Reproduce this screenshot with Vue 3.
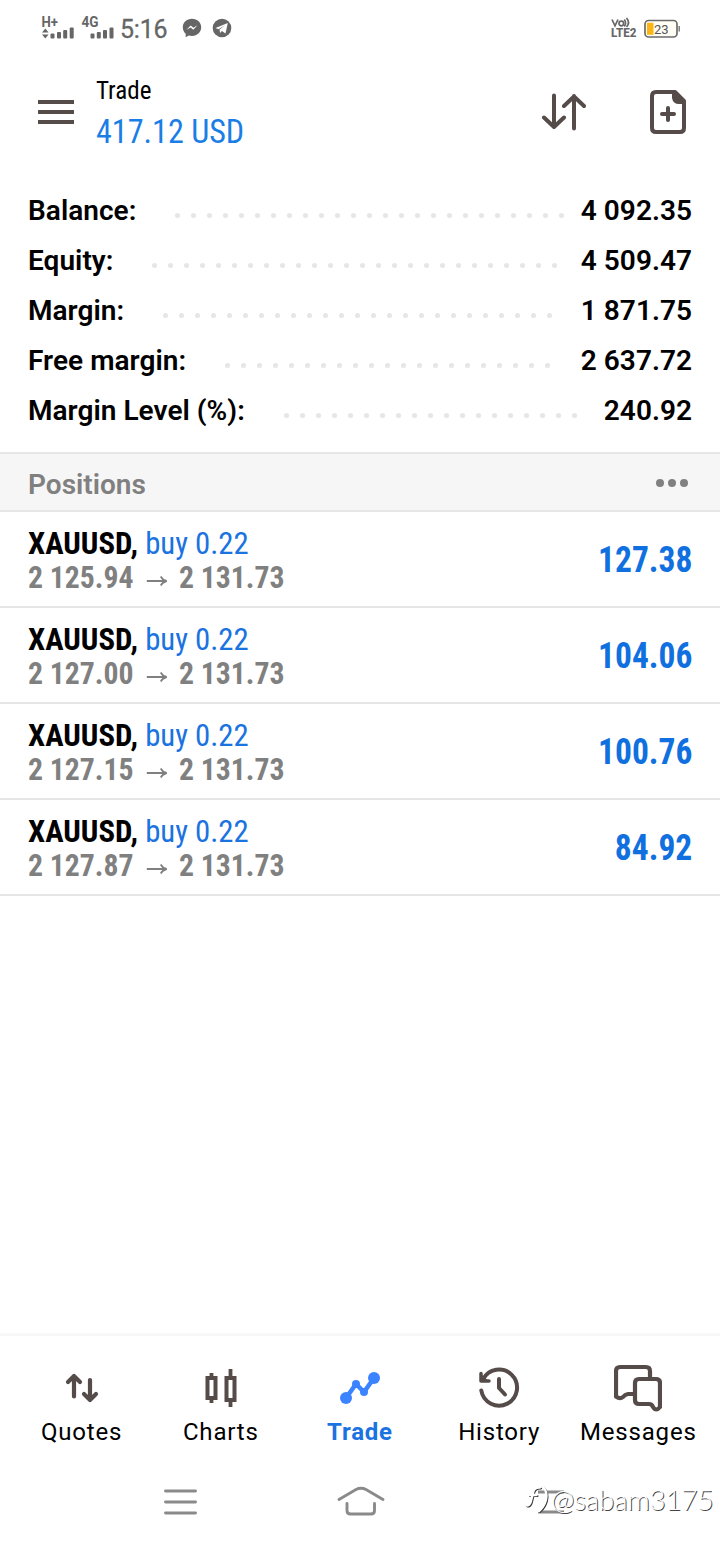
<script setup>
const summary = [
  { label: 'Balance:', value: '4 092.35', dots: 25 },
  { label: 'Equity:', value: '4 509.47', dots: 26 },
  { label: 'Margin:', value: '1 871.75', dots: 25 },
  { label: 'Free margin:', value: '2 637.72', dots: 21 },
  { label: 'Margin Level (%):', value: '240.92', dots: 19 },
]
const positions = [
  { open: '2 125.94', now: '2 131.73', profit: '127.38' },
  { open: '2 127.00', now: '2 131.73', profit: '104.06' },
  { open: '2 127.15', now: '2 131.73', profit: '100.76' },
  { open: '2 127.87', now: '2 131.73', profit: '84.92' },
]
</script>

<template>
  <div class="screen">
    <div class="status">
      <svg class="signals" width="76" height="26" viewBox="0 0 76 26">
        <g fill="#666">
          <text x="-0.500" y="12" class="net" textLength="16.500" lengthAdjust="spacingAndGlyphs">H+</text>
          <path d="M0 17.500 L3.300 13.500 L6.600 17.500Z M0 19.500 L6.600 19.500 L3.300 23.500Z" />
          <rect x="8.500" y="18.500" width="4" height="5" rx="1" /><rect x="15" y="17" width="4" height="6.500" rx="1" />
          <rect x="21.200" y="15" width="4" height="8.500" rx="1" /><rect x="27.700" y="12.500" width="4" height="11" rx="1" />
          <text x="39.500" y="12" class="net" textLength="17" lengthAdjust="spacingAndGlyphs">4G</text>
          <rect x="48.500" y="18.500" width="4" height="5" rx="1" /><rect x="54.800" y="17" width="4" height="6.500" rx="1" />
          <rect x="61" y="15" width="4" height="8.500" rx="1" /><rect x="67.500" y="12.500" width="4" height="11" rx="1" />
        </g>
      </svg>
      <span class="clock">5:16</span>
      <svg class="apps" width="50" height="20" viewBox="0 0 50 20">
        <path fill="#666" d="M10 .8C4.500 .8 .8 4.700 .8 9.300c0 2.600 1.100 4.900 2.900 6.400v3.500l3.100-1.700c1 .3 2.100.4 3.200.4 5.500 0 9.200-3.900 9.200-8.600S15.500.8 10 .8z" />
        <path d="M4.500 11.800 8.600 7.500l2.800 2.300 4.100-2.500-4.200 4.400-2.700-2.300z" fill="#fff" />
        <circle cx="40" cy="10" r="9.300" fill="#666" />
        <path d="M33.500 10 45.800 5 43.500 15.500 39.900 13 38 15 37.600 11.600 43 7.300 36.500 11.300z" fill="#fff" />
      </svg>
      <svg class="volte" width="28" height="22" viewBox="0 0 28 22">
        <g fill="none" stroke="#666" stroke-width="1.700">
          <path d="M1 2.500 4 8.800 7 2.500" /><circle cx="10.300" cy="6.500" r="2.300" />
          <path d="M13.300 2.500q2.500 3.500 0 7M15.500 1q4 4.500 0 9" />
        </g>
        <text x="0" y="20" class="lte" textLength="25.500" lengthAdjust="spacingAndGlyphs">LTE2</text>
      </svg>
      <svg class="battery" width="37" height="20" viewBox="0 0 37 20">
        <rect x="1" y="1.500" width="32" height="16.500" rx="3.500" fill="#fffdf4" stroke="#6b6b6b" stroke-width="1.700" />
        <rect x="3" y="3.800" width="6.500" height="12" fill="#fbb615" />
        <rect x="34.500" y="7" width="1.400" height="5.500" fill="#777" />
        <text x="10" y="14.500" class="pct">23</text>
      </svg>
    </div>

    <header class="top">
      <svg class="burger" width="36" height="24" viewBox="0 0 36 24"><path d="M0 2h36M0 12h36M0 22h36" stroke="#554b48" stroke-width="4" /></svg>
      <div class="title">
        <div class="name cond">Trade</div>
        <div class="sum cond">417.12 USD</div>
      </div>
      <svg class="sort" width="44" height="38" viewBox="0 0 44 38">
        <path d="M12 2.500V34M2 24.500l10 9.500 10-9.500M32 35.500V3M22 13l10-9.500L42 13" fill="none" stroke="#554b48" stroke-width="4" stroke-linecap="round" stroke-linejoin="round" />
      </svg>
      <svg class="add" width="36" height="44" viewBox="0 0 36 44">
        <path d="M6 2H25L34 11V38Q34 42 30 42H6Q2 42 2 38V6Q2 2 6 2Z" fill="none" stroke="#554b48" stroke-width="4" stroke-linejoin="round" />
        <path d="M22 2V8Q23 14 29 14H35V10L26 1Z" fill="#554b48" />
        <path d="M18 18V30M12 24H24" stroke="#554b48" stroke-width="4" stroke-linecap="round" />
      </svg>
    </header>

    <section class="summary">
      <div v-for="r in summary" :key="r.label" class="line">
        <span>{{ r.label }}</span>
        <span class="dots"><i v-for="n in r.dots" :key="n"></i></span>
        <span class="value">{{ r.value }}</span>
      </div>
    </section>

    <div class="section-head">
      <span>Positions</span>
      <svg width="32" height="8" viewBox="0 0 32 8" fill="#808080"><circle cx="4" cy="4" r="4" /><circle cx="16" cy="4" r="4" /><circle cx="28" cy="4" r="4" /></svg>
    </div>

    <div v-for="p in positions" :key="p.open" class="position">
      <div>
        <div class="symbol cond"><b>XAUUSD,</b> <span>buy 0.22</span></div>
        <div class="prices cond">
          <span>{{ p.open }}</span>
          <svg width="24" height="12" viewBox="0 0 24 12"><path d="M1 6H22M16 1.500Q18 5 22.500 6Q18 7 16 10.500" fill="none" stroke="#808080" stroke-width="1.800" /></svg>
          <span>{{ p.now }}</span>
        </div>
      </div>
      <div class="profit cond">{{ p.profit }}</div>
    </div>

    <nav class="tabs">
      <div class="tab">
        <svg width="48" height="48" viewBox="0 0 48 48"><path d="M16 32.500V12M10 18l6-6 6 6M32 16v20M26 30l6 6 6-6" fill="none" stroke="#554b48" stroke-width="4.200" stroke-linecap="round" stroke-linejoin="round" /></svg>
        <span>Quotes</span>
      </div>
      <div class="tab">
        <svg width="48" height="48" viewBox="0 0 48 48"><g fill="none" stroke="#554b48" stroke-width="4"><path d="M10.500 14h8v20h-8zM29.500 14h8v22h-8z" /><path d="M14.500 9v5M14.500 34v5M33.500 5v9M33.500 36v7" stroke-width="3.800" /></g></svg>
        <span>Charts</span>
      </div>
      <div class="tab active">
        <svg width="48" height="48" viewBox="0 0 48 48"><path d="M10 34 20 20 28 28 38 14" fill="none" stroke="#3b83ff" stroke-width="4.500" /><g fill="#3b83ff"><circle cx="10" cy="34" r="6" /><circle cx="20" cy="20" r="4" /><circle cx="28" cy="28" r="4" /><circle cx="38" cy="14" r="6" /></g></svg>
        <span>Trade</span>
      </div>
      <div class="tab">
        <svg width="48" height="48" viewBox="0 0 48 48"><g fill="none" stroke="#554b48" stroke-width="4" stroke-linecap="round" stroke-linejoin="round"><path d="M6.300 26.500A18 18 0 1 0 8 15.500" /><path d="M6 9.500V17H14" stroke-width="3.500" /><path d="M24 15v9l6 6.500" /></g><path d="M5 9 14 17.500H5z" fill="#554b48" /></svg>
        <span>History</span>
      </div>
      <div class="tab">
        <svg class="chat" width="48" height="48" viewBox="0 0 48 48"><g fill="none" stroke="#554b48" stroke-width="4.200" stroke-linejoin="round" stroke-linecap="round"><path d="M20 30H14Q11 30.500 9 33Q6 35.500 2 32.500V7Q2 3 6 3H32Q36 3 36 7V14" /><path d="M25 15H42Q46 15 46 19V43Q42 48 39 43Q38 40 35 40H25Q21 40 21 36V19Q21 15 25 15Z" /></g></svg>
        <span>Messages</span>
      </div>
    </nav>

    <div class="system">
      <svg class="recent" width="34" height="28" viewBox="0 0 34 28"><path d="M1.500 3H31.500M1.500 14H31.500M1.500 25H31.500" stroke="#8a8a8a" stroke-width="2.900" stroke-linecap="round" /></svg>
      <svg class="home" width="48" height="32" viewBox="0 0 48 32"><path d="M2 14.500 19 4.500Q24 2 29 4.500L46 14.500M10 18.500V25.500Q10 29 13.500 29H34Q37.500 29 37.500 25.500V18.500" fill="none" stroke="#8a8a8a" stroke-width="2.900" stroke-linecap="round" /></svg>
      <svg class="back" width="36" height="26" viewBox="0 0 36 26"><path d="M4 3H30M4 23H30" stroke="#8a8a8a" stroke-width="2.900" /></svg>
    </div>
    <div class="mark">
      <svg width="28" height="34" viewBox="0 0 28 34">
        <g fill="none" stroke-linecap="round">
          <path d="M3 24Q7 26 8.500 18L10.500 10Q12 6 17 6.500M6 14H13.500M19 5Q25 10 23 19Q21 26 16 30" stroke="#333" stroke-width="2" />
          <path d="M2 23Q6 25 7.500 17L9.500 9Q11 5 16 5.500M5 13H12.500M18 4Q24 9 22 18Q20 25 15 29" stroke="#fff" stroke-width="2.400" />
        </g>
      </svg>
      <span>@sabam3175</span>
    </div>
  </div>
</template>

<style>
body { background: #fff; }
</style>
<style scoped>
.screen { position: relative; width: 720px; height: 1544px; overflow: hidden; background: #fff; color: #000; font-family: Roboto, "Liberation Sans", sans-serif; display: flex; flex-direction: column; }
svg { display: block; flex: none; }
.cond { font-family: "Roboto Condensed", Roboto, sans-serif; font-stretch: 75%; white-space: nowrap; transform-origin: 0 50%; }
.status { height: 56px; display: flex; align-items: center; padding: 0 39px 0 42px; box-sizing: border-box; color: #666; }
.signals { margin-top: -1px; overflow: visible; }
.net { font-size: 14px; font-weight: 700; }
.clock { font-size: 25px; line-height: 30px; margin: 3px 0 0 2px; width: 49px; white-space: nowrap; letter-spacing: -.2px; -webkit-text-stroke: .3px #666; }
.apps { margin-left: 13px; }
.volte { margin-left: auto; }
.lte { font-size: 12px; font-weight: 800; fill: #666; }
.battery { margin: 2px 0 0 5px; }
.pct { font-size: 13px; fill: #555; }
.top { height: 129px; display: flex; box-sizing: border-box; padding: 16px 34px 0 38px; }
.burger { margin-top: 28px; }
.title { margin-left: 22px; flex: 1; }
.name { font-size: 26.500px; line-height: 36px; transform: scaleX(.945); }
.sum { font-size: 34px; line-height: 46px; color: #1a7ee6; transform: scaleX(.945); }
.sort { margin: 21px 64px 0 0; }
.add { margin-top: 18px; }
.summary { height: 267px; padding: 0 28px; }
.line { height: 50px; display: flex; align-items: center; font-size: 28px; font-weight: 600; letter-spacing: .04px; white-space: nowrap; }
.dots { display: flex; gap: 11px; margin-left: 39px; padding-top: 10px; }
.dots i { width: 5px; height: 5px; border-radius: 50%; background: #e6e6e6; }
.value { margin-left: auto; }
.section-head { height: 60px; box-sizing: border-box; border-top: 2px solid #e6e6e6; border-bottom: 2px solid #e6e6e6; background: #f6f6f6; padding: 2px 32px 0 28px; display: flex; align-items: center; justify-content: space-between; font-size: 28px; font-weight: 600; color: #808080; }
.section-head span { padding-top: 2px; }
.position { height: 96px; box-sizing: border-box; border-bottom: 2px solid #e6e6e6; padding: 1px 28px 0; display: flex; align-items: center; justify-content: space-between; }
.symbol { font-size: 32px; line-height: 34px; transform: scaleX(.961); }
.symbol span { color: #1a73e0; }
.prices { font-size: 32px; line-height: 34px; font-weight: 700; color: #808080; display: flex; align-items: center; transform: scaleX(.928); }
.prices svg { margin: 8px 12px 0 13px; }
.profit { font-size: 36px; font-weight: 700; color: #1170e0; transform: scaleX(.93); transform-origin: 100% 50%; }
.tabs { margin-top: auto; height: 130px; box-sizing: border-box; border-top: 2px solid #f7f7f7; box-shadow: 0 -1px 2px #fafafa; padding: 28px 12px 0; display: grid; grid-template-columns: repeat(5, 139.2px); }
.tab { display: flex; flex-direction: column; align-items: center; font-size: 24px; line-height: 32px; letter-spacing: .8px; }
.tab span { margin-top: 4px; }
.active { color: #1a73e0; font-weight: 700; }
.system { height: 80px; display: flex; box-sizing: border-box; padding: 24px 0 0 164px; }
.home { margin: -3px 0 0 138.500px; }
.back { margin: 1px 0 0 149px; }
.mark { position: absolute; left: 524px; top: 1482px; display: flex; align-items: center; font: 300 28px/34px Lato, sans-serif; letter-spacing: -.3px; color: #fff; text-shadow: 1px 1px 0 #444; }
.mark span { margin-left: -1px; }
</style>
